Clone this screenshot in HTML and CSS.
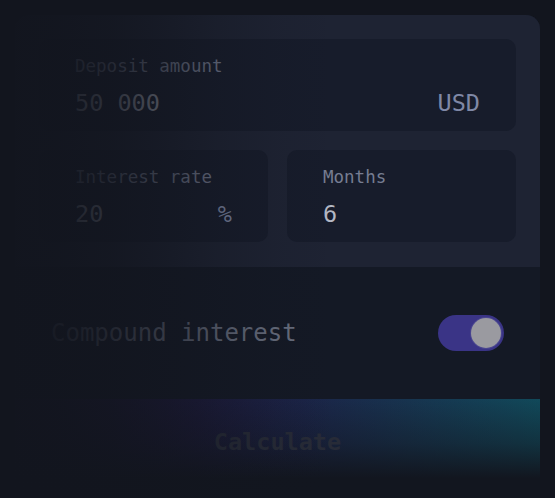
FILE: index.html
```html
<!DOCTYPE html>
<html lang="en">
<head>
<meta charset="utf-8">
<title>Deposit calculator</title>
<link rel="stylesheet" href="styles.css">
</head>
<body>
<div class="page">
  <div class="card">
    <div class="card-top">
      <div class="field field-wide">
        <div class="label">Deposit amount</div>
        <div class="value-row"><span class="value dim">50 000</span><span class="unit">USD</span></div>
      </div>
      <div class="field">
        <div class="label">Interest rate</div>
        <div class="value-row"><span class="value dim">20</span><span class="unit">%</span></div>
      </div>
      <div class="field">
        <div class="label">Months</div>
        <div class="value-row"><span class="value">6</span></div>
      </div>
    </div>
    <div class="option-row">
      <span class="option-label">Compound interest</span>
      <span class="toggle"><span class="knob"></span></span>
    </div>
    <div class="calc-btn">Calculate</div>
  </div>
  <div class="fade"></div>
</div>
</body>
</html>
```
FILE: styles.css
```css
* { box-sizing: border-box; }
html, body { margin: 0; height: 100%; }
body {
  background: #12151e;
  font-family: "DejaVu Sans Mono", "Liberation Mono", monospace;
  overflow: hidden;
}
.page {
  position: relative;
  height: 498px;
  padding: 15px 15px 0 15px;
}
.card {
  background: #141925;
  border-radius: 14px 14px 0 0;
  overflow: hidden;
  height: 100%;
}
.card-top {
  background: #1e2333;
  padding: 24px 24px 25px;
  display: grid;
  grid-template-columns: 1fr 1fr;
  gap: 19px;
}
.field {
  background: #171c2b;
  border-radius: 10px;
  height: 92px;
  padding: 16px 36px 0;
}
.field-wide { grid-column: 1 / 3; }
.label {
  font-size: 17.5px;
  line-height: 22px;
  color: #767d92;
}
.value-row {
  display: flex;
  justify-content: space-between;
  align-items: baseline;
  margin-top: 12px;
  font-size: 23.5px;
  line-height: 28px;
}
.value { color: #b4b8c4; }
.value.dim { color: #a3a8b6; }
.unit { color: #7f88a6; }
.option-row {
  height: 132px;
  padding: 0 36px;
  display: flex;
  align-items: center;
  justify-content: space-between;
}
.option-label {
  font-size: 24px;
  color: #6a7080;
}
.toggle {
  width: 66px;
  height: 36px;
  border-radius: 18px;
  background: #3a3486;
  display: flex;
  align-items: center;
  justify-content: flex-end;
  padding: 0 3px;
}
.knob {
  width: 30px;
  height: 30px;
  border-radius: 50%;
  background: #9a9aa0;
  box-shadow: 0 0 0 1px #4a4690;
}
.calc-btn {
  height: 99px;
  padding-top: 29px;
  text-align: center;
  font-size: 23.5px;
  font-weight: bold;
  color: #272b37;
  background:
    linear-gradient(to bottom, rgba(18, 22, 31, 0) 0%, rgba(18, 22, 31, 0.45) 45%, #12161f 80%),
    linear-gradient(90deg, #1c1632 0%, #1d1a3e 35%, #1b2448 55%, #17344f 75%, #11495a 100%);
}
.fade {
  position: absolute;
  inset: 0;
  pointer-events: none;
  background: linear-gradient(90deg,
    rgba(18, 21, 30, 0.98) 0%,
    rgba(18, 21, 30, 0.93) 10%,
    rgba(18, 21, 30, 0.82) 20%,
    rgba(18, 21, 30, 0.6) 30%,
    rgba(18, 21, 30, 0.32) 40%,
    rgba(18, 21, 30, 0.12) 50%,
    rgba(18, 21, 30, 0) 60%);
}
```
